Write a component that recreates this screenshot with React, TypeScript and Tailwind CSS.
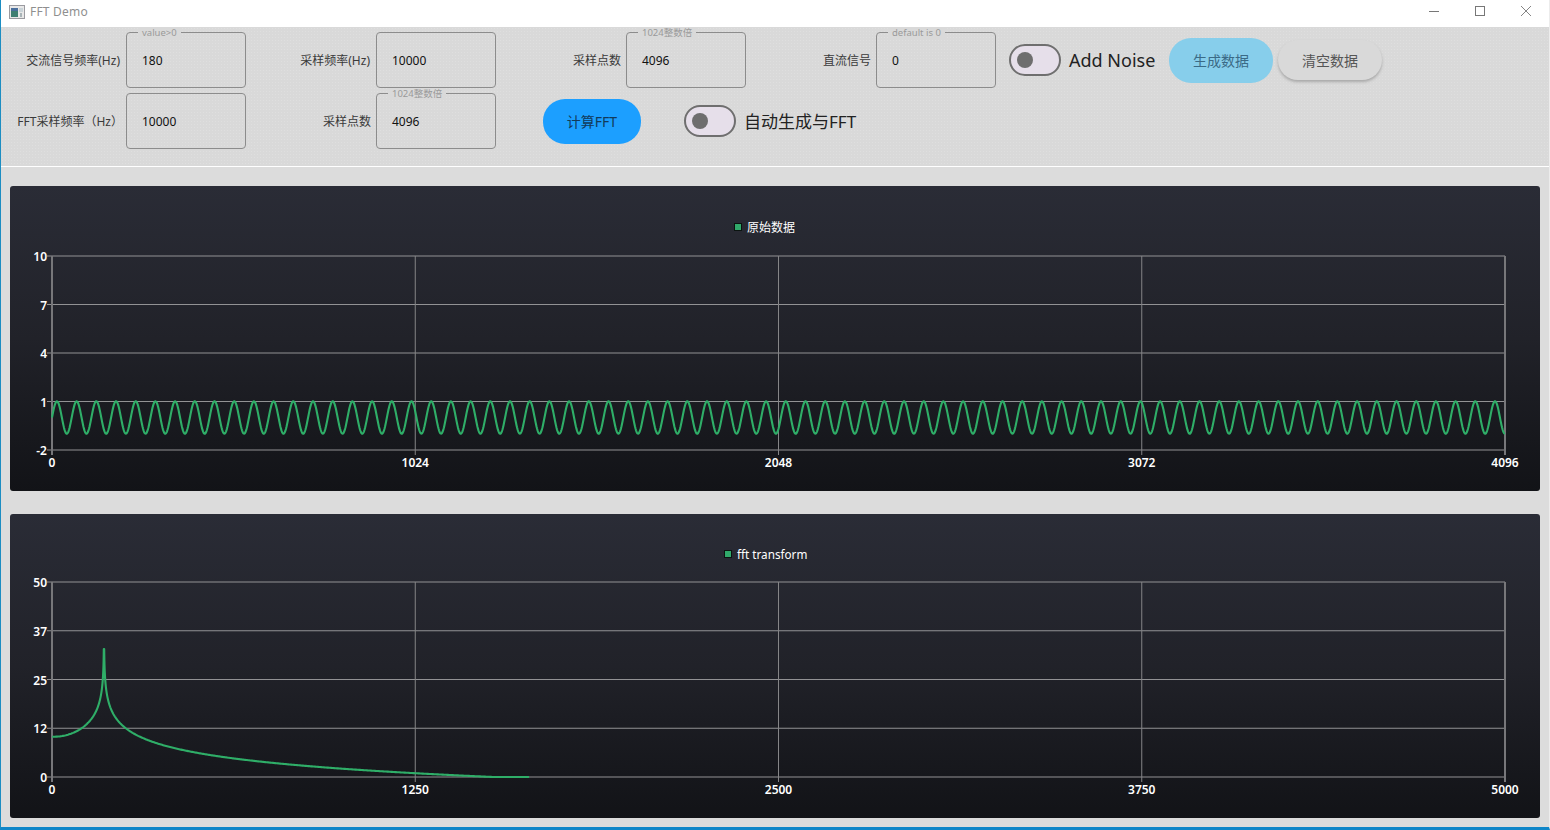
import React from "react";

const sinePoints = () => {
  const pts: string[] = [];
  for (let x = 0; x <= 1453; x += 0.5) {
    const y = 231.5 - 16.2 * Math.sin((2 * Math.PI * x) / 19.7);
    pts.push(`${(42 + x).toFixed(1)},${y.toFixed(2)}`);
  }
  return pts.join(" ");
};

// log falloff fitted to the spectrum, peak sits at page x=104, baseline at panel y=263
const fftPoints = () => {
  const pts: string[] = [];
  for (let x = 52; x <= 530; x += x > 90 && x < 125 ? 0.1 : 1) {
    const d = Math.max(Math.abs(x - 104), 0.2);
    const extra = x < 104 ? 6.3 * Math.pow(d / 52, 3) : 0;
    const h = Math.max(Math.min(100.8 - 16.9 * Math.log(d) + extra, 128), 0);
    pts.push(`${(x - 10).toFixed(1)},${(263 - h).toFixed(2)}`);
  }
  return pts.join(" ");
};

type ChartProps = {
  legend: string;
  legendX: number;
  legendY: number;
  legendSize: number;
  top: number;
  bottom: number;
  yLabels: string[];
  xLabels: string[];
  points: string;
  height: string;
};

const Chart = ({ legend, legendX, legendY, legendSize, top, bottom, yLabels, xLabels, points, height }: ChartProps) => {
  const left = 42;
  const right = 1495;
  const xs = xLabels.map((_, i) => left + ((right - left) * i) / (xLabels.length - 1));
  const ys = yLabels.map((_, i) => top + ((bottom - top) * i) / (yLabels.length - 1));

  return (
    <div className={`${height} bg-linear-to-b from-[#2a2c36] via-[#212229] to-[#121317] rounded-[3px] shrink-0`}>
      <svg viewBox={`0 0 1530 ${bottom + 41}`} className="w-full h-full block">
        <rect x={legendX - 0.5} y={legendY - 0.5} width="7" height="7" fill="#30a96a" stroke="#0b1410" />
        <text x={legendX + 12} y={legendY + 8} fontSize={legendSize} fill="#ffffff">{legend}</text>

        {ys.map((y, i) => (
          <g key={i}>
            <line x1={left - 5} x2={right} y1={y} y2={y} stroke="#929294" strokeWidth="1.1" />
            <text x={37} y={y + 5} fontSize="12" fontWeight="600" fill="#ffffff" textAnchor="end">{yLabels[i]}</text>
          </g>
        ))}
        {xs.map((x, i) => (
          <g key={i}>
            <line
              x1={x}
              x2={x}
              y1={top}
              y2={bottom + 5}
              stroke={i === 0 || i === xs.length - 1 ? "#77777a" : "#858587"}
              strokeWidth={i === 0 || i === xs.length - 1 ? 2 : 1}
            />
            <text x={x} y={bottom + 17} fontSize="12" fontWeight="600" fill="#ffffff" textAnchor="middle">{xLabels[i]}</text>
          </g>
        ))}

        <polyline points={points} fill="none" stroke="#2fae68" strokeWidth="2.1" strokeLinejoin="round" />
      </svg>
    </div>
  );
};

const Field = ({ label, value, hint, labelClass }: { label: string; value: string; hint?: string; labelClass?: string }) => (
  <div className="w-[250px] flex items-center shrink-0">
    <span className={`w-[120px] text-right text-[12px] pt-[2px] text-[#3a3a3a] whitespace-nowrap ${labelClass ?? ""}`}>{label}</span>
    <div className="relative ml-[5px] w-[120px] h-[56px] border border-[#8c8c8c] rounded-[4px] flex items-center pl-[15px] pt-[2px] text-[12px] text-[#111]">
      {hint && (
        <span className="absolute left-[11px] top-[-6px] px-[4px] bg-[#d9d9d9] text-[9.5px] leading-[12px] text-[#9a9a9a] whitespace-nowrap">
          {hint}
        </span>
      )}
      {value}
    </div>
  </div>
);

const Toggle = () => (
  <div className="w-[52px] h-[32px] shrink-0 rounded-full border-[2px] border-[#6f6f6f] bg-[#e6dfea] flex items-center pl-[6px]">
    <div className="w-[16px] h-[16px] rounded-full bg-[#6e6e6e]" />
  </div>
);

export default function App() {
  return (
    <div className="w-screen h-screen overflow-hidden flex flex-col bg-[#dcdcdc] border-l border-l-[#1c8dc2] border-r border-r-[#ececec] border-b-[3px] border-b-[#0f86c8] font-['Noto_Sans','Noto_Sans_CJK_SC',sans-serif]">
      {/* title bar */}
      <div className="h-[27px] shrink-0 bg-white flex items-center justify-between">
        <div className="flex items-center pl-[8px] pb-[4px] gap-[5px]">
          <svg width="16" height="14" viewBox="0 0 16 14">
            <rect x="0.5" y="0.5" width="15" height="13" fill="#e8e8e8" stroke="#9a9aa0" />
            <rect x="2" y="3" width="7" height="9" fill="#3f7f72" />
            <rect x="2" y="3" width="7" height="3" fill="#4a6f9c" />
            <rect x="10" y="3" width="4" height="4" fill="#c9d3d8" />
            <rect x="11" y="8" width="2" height="4" fill="#a9b4b8" />
          </svg>
          <span className="text-[12px] text-[#8f8f8f] tracking-[0.2px]">FFT Demo</span>
        </div>
        <div className="flex pb-[5px]">
          <div className="w-[46px] h-[22px] flex items-center justify-center">
            <svg width="10" height="10" viewBox="0 0 10 10"><line x1="0" x2="10" y1="5.5" y2="5.5" stroke="#777" /></svg>
          </div>
          <div className="w-[46px] h-[22px] flex items-center justify-center">
            <svg width="10" height="10" viewBox="0 0 10 10"><rect x="0.5" y="0.5" width="9" height="9" fill="none" stroke="#777" /></svg>
          </div>
          <div className="w-[46px] h-[22px] flex items-center justify-center">
            <svg width="10" height="10" viewBox="0 0 10 10"><path d="M0 0L10 10M10 0L0 10" stroke="#777" strokeWidth="0.9" /></svg>
          </div>
        </div>
      </div>

      {/* controls */}
      <div className="shrink-0 bg-[#d9d9d9] bg-[radial-gradient(circle,#dfdfdf_0.6px,transparent_0.7px)] bg-size-[3px_3px] border-b border-b-white pt-[5px] pb-[17px] flex flex-col gap-[5px]">
        <div className="flex items-center h-[56px]">
          <Field label="交流信号频率(Hz)" value="180" hint="value>0" labelClass="pr-[1px]" />
          <Field label="采样频率(Hz)" value="10000" labelClass="pr-[1px]" />
          <Field label="采样点数" value="4096" hint="1024整数倍" />
          <Field label="直流信号" value="0" hint="default is 0" />
          <div className="ml-[8px]"><Toggle /></div>
          <span className="ml-[8px] w-[87px] text-[18px] text-[#222] whitespace-nowrap">Add Noise</span>
          <button className="ml-[13px] w-[104px] h-[45px] rounded-[22px] bg-[#87ceeb] text-[14px] text-[#3b6a86]">生成数据</button>
          <button className="ml-[5px] w-[104px] h-[40px] rounded-[20px] bg-[#d9d9d9] text-[14px] text-[#555] shadow-[0_2px_3px_#a9a9a9]">清空数据</button>
        </div>
        <div className="flex items-center h-[56px]">
          <Field label="FFT采样频率（Hz）" value="10000" labelClass="-mr-[2px] ml-[2px]" />
          <Field label="采样点数" value="4096" hint="1024整数倍" />
          <button className="ml-[42px] w-[98px] h-[45px] rounded-[22px] bg-[#1c9fff] pt-[1px] text-[14px] text-[#123a5a]">计算FFT</button>
          <div className="ml-[43px]"><Toggle /></div>
          <span className="ml-[8px] pt-[1px] text-[17px] text-[#222] whitespace-nowrap">自动生成与FFT</span>
        </div>
      </div>

      {/* charts */}
      <div className="flex-1 min-h-0 px-[9px] pt-[19px] flex flex-col gap-[23px]">
        <Chart
          height="h-[305px]"
          legend="原始数据"
          legendX={725}
          legendY={38}
          legendSize={12}
          top={70}
          bottom={264}
          yLabels={["10", "7", "4", "1", "-2"]}
          xLabels={["0", "1024", "2048", "3072", "4096"]}
          points={sinePoints()}
        />
        <Chart
          height="h-[304px]"
          legend="fft transform"
          legendX={715}
          legendY={37}
          legendSize={11.7}
          top={68}
          bottom={263}
          yLabels={["50", "37", "25", "12", "0"]}
          xLabels={["0", "1250", "2500", "3750", "5000"]}
          points={fftPoints()}
        />
      </div>
    </div>
  );
}
